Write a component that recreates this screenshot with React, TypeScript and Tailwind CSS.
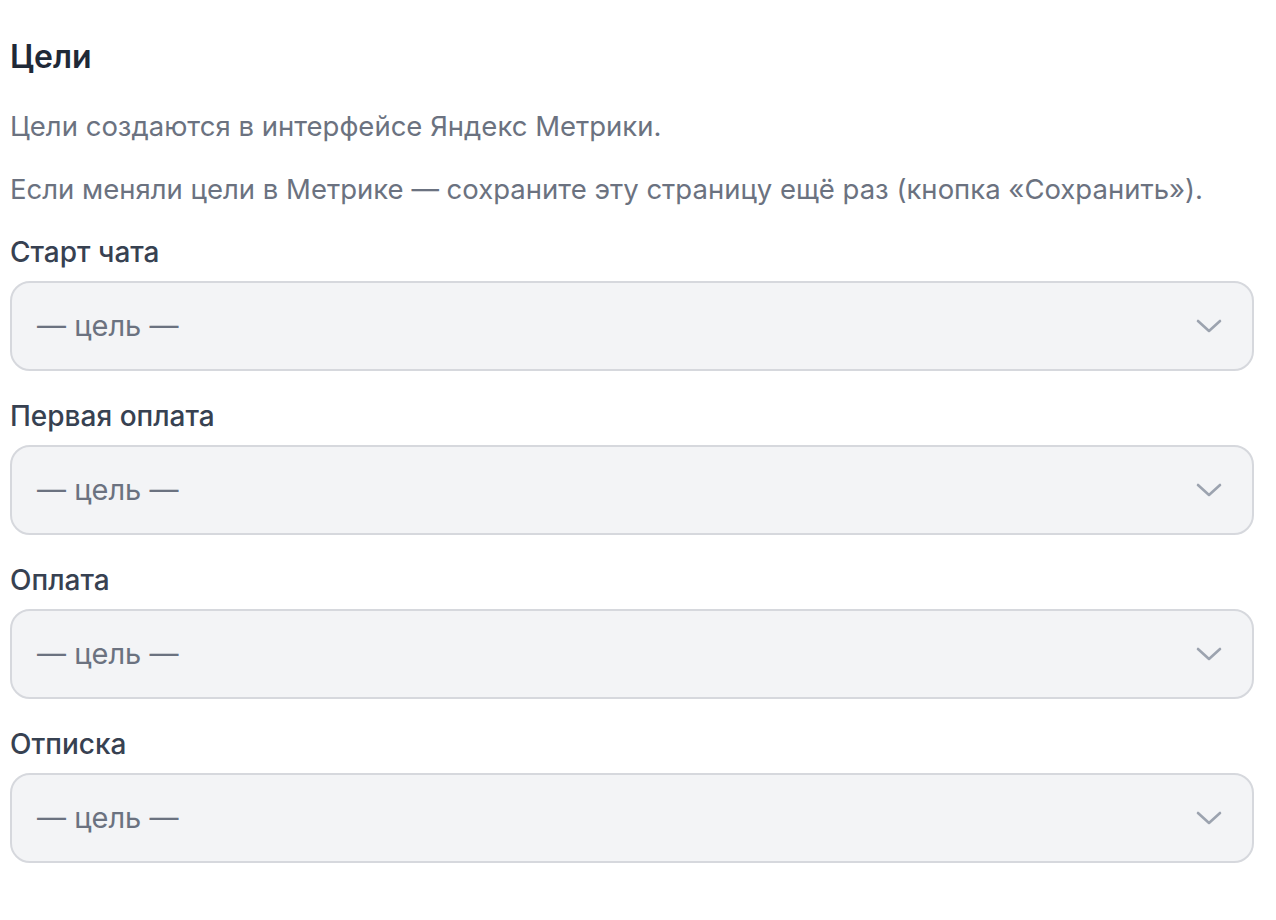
import React from 'react'

const fields = ['Старт чата', 'Первая оплата', 'Оплата', 'Отписка']

function GoalSelect({ label }: { label: string }) {
  return (
    <div className="mt-[29px]">
      <div className="text-[28px] leading-[32px] font-medium text-[#374151]">{label}</div>
      <button
        type="button"
        className="mt-[13px] flex h-[90px] w-full items-center justify-between rounded-[20px] border-2 border-[#d6d8dd] bg-[#f3f4f6] pl-[25px] pr-[30px] text-left"
      >
        <span className="text-[29px] text-[#6b7280]">— цель —</span>
        <svg width="26" height="14" viewBox="0 0 26 14" fill="none" aria-hidden="true">
          <path d="M2 2l11 10L24 2" stroke="#9ca3af" strokeWidth="2.6" strokeLinecap="round" strokeLinejoin="round" />
        </svg>
      </button>
    </div>
  )
}

export default function App() {
  return (
    <div className="min-h-screen bg-white pl-[10px] pr-[22px] pt-[39px]" style={{ fontFamily: 'Inter, "Noto Sans", sans-serif' }}>
      <h2 className="text-[32px] leading-[36px] font-semibold text-[#1f2937]">Цели</h2>
      <p className="mt-[32px] text-[27.5px] leading-[39px] text-[#6b7280]">Цели создаются в интерфейсе Яндекс Метрики.</p>
      <p className="mt-[24px] text-[27.5px] leading-[39px] text-[#6b7280]">
        Если меняли цели в Метрике — сохраните эту страницу ещё раз (кнопка «Сохранить»).
      </p>
      <div className="-mt-[2.5px]">
        {fields.map(f => (
          <GoalSelect key={f} label={f} />
        ))}
      </div>
    </div>
  )
}
